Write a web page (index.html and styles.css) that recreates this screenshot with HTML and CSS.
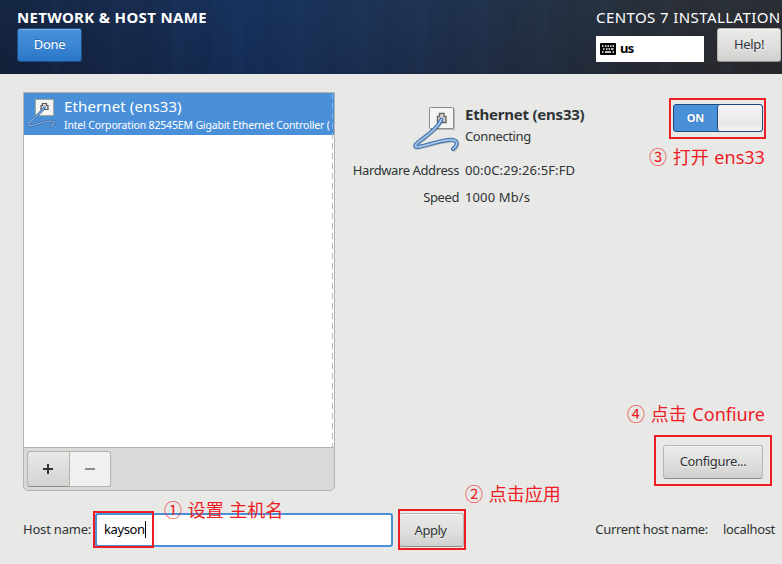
FILE: index.html
```html
<!DOCTYPE html>
<html lang="en">
<head>
<meta charset="utf-8">
<title>Network &amp; Host Name</title>
<link rel="stylesheet" href="styles.css">
</head>
<body>
<header class="header">
  <div class="left">
    <h1 class="title">NETWORK &amp; HOST NAME</h1>
    <button class="btn done">Done</button>
  </div>
  <div class="right">
    <div class="product">CENTOS 7 INSTALLATION</div>
    <div class="tools">
      <div class="layout">
        <svg width="16" height="12" viewBox="0 0 16 12"><rect width="16" height="12" rx="1"/><path d="M2 3h1.500M5 3h1.500M7.500 3h1.500M10 3h1.500M12.500 3h1.500M3 6h1.500M6 6h1.500M8.500 6h1.500M11 6h2.500" stroke="#fff" stroke-width="1.600"/><path d="M2 9h1.500M5 9h6M12.500 9h1.500" stroke="#fff" stroke-width="1.500"/></svg>
        <span>us</span>
      </div>
      <button class="btn help">Help!</button>
    </div>
  </div>
</header>
<main class="main">
  <section class="devices">
    <div class="list">
      <div class="device">
        <svg class="small-icon" viewBox="0 0 32 32">
          <rect x="8.500" y="2.500" width="18" height="16" fill="#f4f4f2" stroke="#a5a69e"/>
          <path d="M14 12.500v-4h1.500v-2h4v2h1.500v4z" fill="#ddd" stroke="#555753" stroke-width="1.200"/>
          <g fill="none" stroke-linecap="round" stroke-linejoin="round">
            <path d="M17.500 10.500C13 17 4 23 1.500 27C1 32 16 24 23 24C29 24 28 27 24 29.500" stroke="#3f6eab" stroke-width="2.600"/>
            <path d="M17.500 10.500C13 17 4 23 1.500 27C1 32 16 24 23 24C29 24 28 27 24 29.500" stroke="#8eb2df" stroke-width="1.100"/>
          </g>
        </svg>
        <div class="device-text">
          <div><span class="device-name">Ethernet (ens33)</span></div>
          <div><span class="device-desc">Intel Corporation 82545EM Gigabit Ethernet Controller (</span></div>
        </div>
      </div>
    </div>
    <div class="toolbar">
      <button class="tool add"><svg width="12" height="12"><path d="M1 6h10M6 1v10" stroke="#2e3436" stroke-width="2"/></svg></button>
      <button class="tool remove"><svg width="12" height="12"><path d="M1 6h10" stroke="#8b8e8f" stroke-width="2"/></svg></button>
    </div>
  </section>
  <section class="details">
    <div class="summary">
      <svg class="big-icon" viewBox="0 0 48 48">
        <rect x="18" y="4" width="25" height="22" rx="1" opacity=".2"/>
        <rect x="17.500" y="3.500" width="24" height="21" rx="1" fill="#f5f5f3" stroke="#8a8c88"/>
        <path d="M25.500 18.500v-6h2v-3h4.500v3h2v6z" fill="#ddd" stroke="#666864" stroke-width="1.400"/>
        <g fill="none" stroke-linecap="round" stroke-linejoin="round">
          <path d="M29.500 17C24 29 8 36 3.500 42C1 48 24 38 36 37C47 36 47 41 42 46" stroke="#000" stroke-width="4" opacity=".15"/>
          <path d="M29.500 15.500C24 28 8 35 3.500 41C1 47 24 37 36 36C46 35 47 40 41 45" stroke="#3465a4" stroke-width="4"/>
          <path d="M29.500 15.500C24 28 8 35 3.500 41C1 47 24 37 36 36C46 35 47 40 41 45" stroke="#729fcf" stroke-width="2.600"/>
          <path d="M29.500 15.500C24 28 8 35 3.500 41C1 47 24 37 36 36C46 35 47 40 41 45" stroke="#c3d9f3" stroke-width="1"/>
        </g>
      </svg>
      <div class="names">
        <div><span class="name">Ethernet (ens33)</span></div>
        <div><span class="state">Connecting</span></div>
      </div>
      <div class="switch"><span class="on">ON</span><span class="knob"></span></div>
    </div>
    <dl class="facts">
      <dt><span class="hw">Hardware Address</span></dt><dd><span class="mac">00:0C:29:26:5F:FD</span></dd>
      <dt><span class="hw">Speed</span></dt><dd><span class="mac">1000 Mb/s</span></dd>
    </dl>
    <button class="btn configure">Configure...</button>
  </section>
</main>
<footer class="footer">
  <label class="host-label">Host name:</label>
  <div class="host-input"><span>kayson</span><i class="caret"></i></div>
  <button class="btn apply">Apply</button>
  <div class="current"><span class="cur-label">Current host name:</span><span class="cur-value">localhost</span></div>
</footer>
<div class="box box1"></div>
<div class="box box2"></div>
<div class="box box3"></div>
<div class="box box4"></div>
<div class="note note1">① 设置 主机名</div>
<div class="note note2">② 点击应用</div>
<div class="note note3">③ 打开 ens33</div>
<div class="note note4">④ 点击 Confiure</div>
</body>
</html>
```
FILE: styles.css
```css
* { box-sizing: border-box; }
body { margin: 0; width: 782px; height: 564px; overflow: hidden; position: relative; background: #e8e8e6; color: #2e3436; font: 13px/20px "Noto Sans", "Open Sans", sans-serif; white-space: nowrap; }
.header { height: 74px; display: flex; justify-content: space-between; padding: 7px 1px 0 17px; color: #fff;
  background: repeating-linear-gradient(90deg, transparent 0 17px, rgba(5,15,40,.06) 23px 25px, transparent 32px 47px, rgba(60,110,180,.03) 53px 61px), linear-gradient(180deg, rgba(40,80,130,.08), rgba(0,0,20,.1)), linear-gradient(90deg, #14233d 0, #17294a 130px, #16305b 245px, #1b3155 340px, #20304b 450px, #252f3d 570px, #2b2d32 680px, #2b2c2e 782px); }
.title { margin: 0; font-size: 15px; line-height: 21px; letter-spacing: .33px; }
.btn { height: 34px; font: inherit; color: #2e3436; padding: 0 0 2px; border: 1px solid #b5b5b2; border-bottom-color: #8f8f8c; border-radius: 3px; background: linear-gradient(#eaeae8, #e0e0de 50%, #d0d0ce); box-shadow: inset 0 1px #f6f6f5; text-shadow: 0 1px #f0f0f0; display: block; letter-spacing: -.35px; }
.done { width: 65px; color: #fff; background: linear-gradient(#4a90d9, #3b86d5 50%, #2a76c6); border-color: #1c5187; box-shadow: inset 0 1px #80b1e5; text-shadow: 0 -1px #286cad; }
.right { width: 185px; }
.product { font-size: 15px; line-height: 21px; letter-spacing: .41px; }
.tools { display: flex; justify-content: space-between; }
.layout { width: 108px; height: 26px; margin-top: 8px; background: #fff; color: #000; font-weight: 700; display: flex; align-items: center; gap: 4px; padding-left: 4px; letter-spacing: -.6px; }
.layout span { padding-bottom: 2px; }
.help { width: 64px; }
.main { display: flex; padding: 18px 19px 0 23px; height: 417px; }
.devices { width: 312px; height: 399px; border: 1px solid #b3b3af; border-radius: 0 0 5px 5px; background: #d9d9d7; overflow: hidden; display: flex; flex-direction: column; }
.list { flex: 1; background: repeating-linear-gradient(#bbb 0 6px, transparent 6px 10px) 308px 0/1px 100% no-repeat, #fff; }
.device { height: 42px; display: flex; color: #fff; padding-left: 3px; overflow: hidden; background: repeating-linear-gradient(#83b2e4 0 6px, transparent 6px 10px) 308px 0/1px 100% no-repeat, #4a90d9; }
.small-icon { width: 32px; height: 32px; margin-top: 4px; flex: none; }
.device-text { padding: 3px 0 0 5px; }
.device-name { font-size: 15px; letter-spacing: .12px; }
.device-desc { font-size: 10.5px; line-height: 16px; letter-spacing: -.16px; }
.device-text div:last-child { line-height: 14px; }
.toolbar { height: 43px; border-top: 1px solid #b3b3af; padding: 3px; display: flex; }
.tool { height: 36px; padding: 0 1px 1px 0; border: 1px solid #b3b3af; display: flex; align-items: center; justify-content: center; }
.add { width: 43px; border-radius: 3px 0 0 3px; background: linear-gradient(#e8e8e6, #d3d3d1); border-bottom-color: #8f8f8c; }
.remove { width: 41px; border-left: 0; border-radius: 0 3px 3px 0; background: #f0f0ef; }
.details { flex: 1; display: flex; flex-direction: column; }
.summary { display: flex; padding: 12px 0 0 77px; height: 65px; }
.big-icon { width: 48px; height: 48px; }
.names { padding: 0 0 0 5px; flex: 1; }
.name { font-size: 15px; font-weight: 700; letter-spacing: -.22px; }
.state { letter-spacing: -.4px; }
.names div:last-child { margin-top: 1px; }
.switch { width: 90px; height: 28px; border: 1px solid #1d4b7d; border-radius: 3px; background: #4a90d9; display: flex; }
.on { flex: 1; color: #fff; font-size: 11px; font-weight: 700; line-height: 25px; text-align: center; text-shadow: 0 0 2px #286cad; }
.knob { width: 45px; border-left: 1px solid #1d4b7d; border-radius: 3px; background: linear-gradient(#f5f5f5, #e8e8e8 70%, #f4f4f4); }
.facts { margin: 3px 0 0; display: grid; grid-template-columns: 124px 1fr; column-gap: 6px; row-gap: 7px; }
.facts dt { text-align: right; }
.facts dd { margin: 0; }
.hw { letter-spacing: -.4px; }
.mac { letter-spacing: .12px; }
.configure { width: 100px; margin: auto 0 12px auto; }
.footer { height: 34px; margin: 22px 7px 0 23px; display: flex; line-height: 32px; }
.host-label { width: 72px; letter-spacing: -.2px; }
.host-input { width: 298px; border: 2px solid #4a90d9; border-radius: 3px; background: #fff; color: #000; line-height: 28px; padding-left: 7px; display: flex; letter-spacing: -.4px; }
.caret { width: 1px; height: 17px; margin-top: 6px; background: #000; }
.apply { width: 65px; margin-left: 6px; padding-right: 2px; letter-spacing: -.5px; }
.current { flex: 1; display: flex; justify-content: flex-end; gap: 15px; letter-spacing: -.33px; }
.box { position: absolute; border: 2px solid #ee1c25; }
.box1 { left: 93px; top: 511px; width: 61px; height: 37px; }
.box2 { left: 398px; top: 509px; width: 68px; height: 41px; }
.box3 { left: 669px; top: 98px; width: 97px; height: 41px; }
.box4 { left: 654px; top: 435px; width: 118px; height: 51px; }
.note { position: absolute; color: #ee1c25; font: 18px/26px "Noto Sans", "Noto Sans CJK SC", sans-serif; word-spacing: 1px; }
.note1 { left: 164px; top: 497px; }
.note2 { left: 465px; top: 481px; }
.note3 { left: 649px; top: 144px; }
.note4 { left: 627px; top: 401px; }
```
